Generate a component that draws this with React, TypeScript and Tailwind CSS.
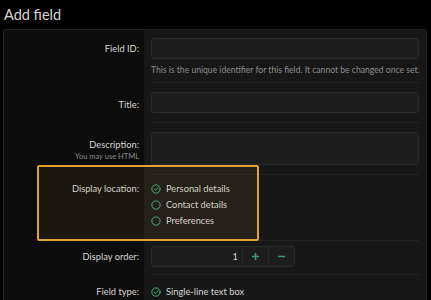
import React from "react";

const CheckCircle = () => (
  <svg width="10" height="10" viewBox="0 0 24 24" fill="none" stroke="#3fae7a" strokeWidth="2.4" strokeLinecap="round" strokeLinejoin="round">
    <circle cx="12" cy="12" r="10" />
    <path d="M7.5 12.5l3 3 6-6.5" />
  </svg>
);
const Circle = () => (
  <svg width="10" height="10" viewBox="0 0 24 24" fill="none" stroke="#3fae7a" strokeWidth="2.4">
    <circle cx="12" cy="12" r="10" />
  </svg>
);
const Plus = () => (
  <svg width="7" height="7" viewBox="0 0 7 7" fill="none" stroke="#3a9a6e" strokeWidth="1.6">
    <path d="M3.5 0v7M0 3.5h7" />
  </svg>
);
const Minus = () => (
  <svg width="7" height="7" viewBox="0 0 7 7" fill="none" stroke="#3a9a6e" strokeWidth="1.6">
    <path d="M0 3.5h7" />
  </svg>
);

function Row({ label, sub, children, sep = true, pt, pb }: { label: string; sub?: string; children: React.ReactNode; sep?: boolean; pt: string; pb: string }) {
  return (
    <div className="flex">
      <div className={`w-[140px] shrink-0 bg-[#0c0c0c] pr-[5px] text-right ${pt}`}>
        <div className="text-[9.3px] leading-[14px] text-[#d6d6d6]">{label}</div>
        {sub && <div className="text-[7.5px] leading-[9px] text-[#8a8a8a]">{sub}</div>}
      </div>
      <div className="min-w-0 flex-1 bg-[#171717] pl-[7px] pr-[7px]">
        <div className={`${pb} ${sep ? "border-b border-[#222]" : ""}`}>{children}</div>
      </div>
    </div>
  );
}

export default function App() {
  return (
    <div className="relative h-[300px] w-[431px] overflow-hidden bg-black" style={{ fontFamily: 'Lato, "Noto Sans", sans-serif' }}>
      <div className="pl-[4px] pt-[2px] text-[14.5px] leading-[25px] text-[#d6d6d6]">Add field</div>
      <div className="ml-[3px] mr-[4px] mt-[2px] overflow-hidden rounded-t-[3px] border border-[#222] border-b-0">
        <Row label="Field ID:" pt="pt-[12px]" pb="pt-[8px] pb-[6px]">
          <div className="h-[21px] rounded-[3px] border border-[#292929] bg-[#1d1d1d]" />
          <div className="mt-[5px] whitespace-nowrap text-[8.6px] leading-[12px] text-[#8c8c8c]">This is the unique identifier for this field. It cannot be changed once set.</div>
        </Row>
        <Row label="Title:" pt="pt-[15px]" pb="pt-[9px] pb-[9px]">
          <div className="h-[21px] rounded-[3px] border border-[#292929] bg-[#1d1d1d]" />
        </Row>
        <Row label="Description:" sub="You may use HTML" pt="pt-[15px]" pb="pt-[9px] pb-[9px]">
          <div className="h-[33px] rounded-[3px] border border-[#292929] bg-[#1d1d1d]" />
        </Row>
        <Row label="Display location:" pt="pt-[7px]" pb="pt-[7px] pb-[12px]">
          <div className="flex flex-col gap-[2px] text-[9.3px] leading-[14px] text-[#d6d6d6]">
            <div className="flex items-center gap-[5px]"><CheckCircle />Personal details</div>
            <div className="flex items-center gap-[5px]"><Circle />Contact details</div>
            <div className="flex items-center gap-[5px]"><Circle />Preferences</div>
          </div>
        </Row>
        <Row label="Display order:" pt="pt-[9px]" pb="pt-[5px] pb-[7px]">
          <div className="flex h-[21px] w-[144px] overflow-hidden rounded-[3px] border border-[#292929] bg-[#1d1d1d] text-[9.3px] text-[#d6d6d6]">
            <div className="flex flex-1 items-center justify-end pr-[4px]">1</div>
            <div className="flex w-[26px] items-center justify-center border-l border-[#292929]"><Plus /></div>
            <div className="flex w-[26px] items-center justify-center border-l border-[#292929]"><Minus /></div>
          </div>
        </Row>
        <Row label="Field type:" pt="pt-[10px]" pb="pt-[10px] pb-[20px]" sep={false}>
          <div className="flex items-center gap-[5px] text-[9.3px] leading-[14px] text-[#d6d6d6]"><CheckCircle />Single-line text box</div>
        </Row>
      </div>
      <div className="pointer-events-none absolute left-[37px] top-[165px] h-[76px] w-[222px] rounded-[2px] border-2 border-[#e3a22e] bg-[rgba(200,150,40,0.08)]" />
    </div>
  );
}
